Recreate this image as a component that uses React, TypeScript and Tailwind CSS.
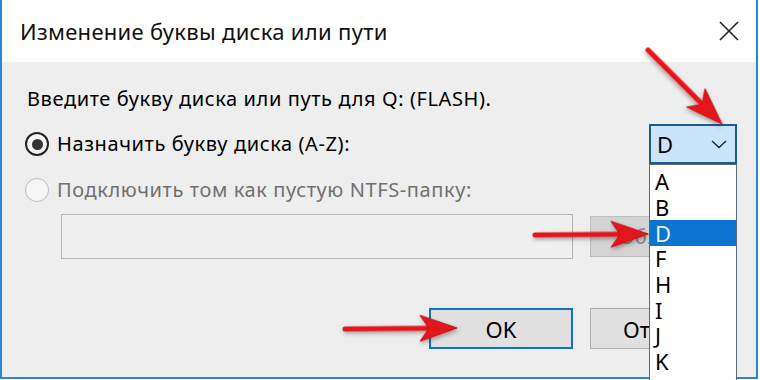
import React from "react";

const letters = ["A", "B", "D", "F", "H", "I", "J", "K"];

type ArrowProps = { x1: number; y1: number; x2: number; y2: number };

// red annotation arrow, drawn horizontally then rotated toward the tip
function Arrow({ x1, y1, x2, y2 }: ArrowProps) {
  const len = Math.hypot(x2 - x1, y2 - y1);
  const angle = (Math.atan2(y2 - y1, x2 - x1) * 180) / Math.PI;
  return (
    <g transform={`translate(${x1} ${y1}) rotate(${angle})`} filter="url(#shadow)">
      <line x1={0} y1={0} x2={len - 26} y2={0} stroke="#e3151b" strokeWidth={5} strokeLinecap="round" />
      <polygon
        points={`${len},0 ${len - 37},-13 ${len - 28},0 ${len - 37},13`}
        fill="#e3151b"
        stroke="#c80f14"
        strokeWidth={1}
        strokeLinejoin="round"
      />
    </g>
  );
}

export default function App() {
  return (
    <div className="relative w-[760px] h-[380px] bg-white overflow-hidden font-['Noto_Sans',sans-serif] text-black">
      <div className="w-[758px] h-[379px] border-x-2 border-b-2 border-[#2a87d8] flex flex-col">
        {/* Title bar */}
        <div className="h-[62px] bg-white flex items-center justify-between pl-[18px] pr-[16px]">
          <span className="text-[22px] leading-[28px] tracking-[0.3px] text-[#111]">Изменение буквы диска или пути</span>
          <svg width="22" height="22" viewBox="0 0 22 22" className="text-[#222]">
            <path d="M2 2 L20 20 M20 2 L2 20" stroke="currentColor" strokeWidth="1.6" />
          </svg>
        </div>

        {/* Body */}
        <div className="flex-1 bg-[#eeeeee] pl-[23px] pr-[19px] pt-[24px] text-[20px] leading-[26px] tracking-[0.6px]">
          <div className="h-[26px] flex items-center pl-[2px]">
            Введите букву диска или путь для Q: (FLASH).
          </div>

          <div className="mt-[12px] h-[40px] flex items-center">
            <span className="w-[24px] h-[24px] rounded-full border-2 border-[#222] bg-[#f4f4f4] flex items-center justify-center">
              <span className="w-[11px] h-[11px] rounded-full bg-[#333]" />
            </span>
            <span className="ml-[8px] flex-1">Назначить букву диска (A-Z):</span>
            <div className="w-[88px] h-[40px] bg-[#cce4f7] border-2 border-[#1c5b8f] flex items-center justify-between pl-[6px] pr-[8px]">
              <span className="text-[22px] leading-[28px] tracking-normal">D</span>
              <svg width="16" height="10" viewBox="0 0 16 10">
                <path d="M1 2 L8 8.5 L15 2" fill="none" stroke="#222" strokeWidth="1.4" />
              </svg>
            </div>
          </div>

          <div className="mt-[13px] h-[26px] flex items-center text-[#707070]">
            <span className="w-[24px] h-[24px] rounded-full border border-[#bdbdbd] bg-[#f7f7f7]" />
            <span className="ml-[8px]">Подключить том как пустую NTFS-папку:</span>
          </div>

          <div className="mt-[11px] flex gap-[17px] pl-[36px]">
            <div className="w-[512px] h-[45px] border border-[#b4b4b4] bg-[#f0f0f0]" />
            <div className="w-[147px] h-[41px] mt-[2px] border border-[#bcbcbc] bg-[#d4d4d4] flex items-center pl-[28px] text-[#8a8a8a]">
              Обзор...
            </div>
          </div>

          <div className="mt-[49px] flex gap-[17px] pl-[404px] text-[22px] leading-[28px] tracking-normal">
            <div className="w-[144px] h-[41px] border-2 border-[#0f73c7] bg-[#e1e1e1] flex items-center justify-center">
              OK
            </div>
            <div className="w-[147px] h-[41px] border border-[#adadad] bg-[#e1e1e1] flex items-center pl-[32px]">
              Отмена
            </div>
          </div>
        </div>
      </div>

      {/* Open drop-down list */}
      <div className="absolute left-[649px] top-[164px] w-[88px] h-[230px] bg-white border border-[#5d6b78] pt-[4px] text-[22px] leading-[25px]">
        {letters.map((l) => (
          <div
            key={l}
            className={
              l === "D"
                ? "h-[25.7px] flex items-center pl-[5px] bg-[#0a74d0] text-[#e6f2fc]"
                : "h-[25.7px] flex items-center pl-[5px]"
            }
          >
            {l}
          </div>
        ))}
      </div>

      {/* Red annotation arrows */}
      <svg className="absolute inset-0 pointer-events-none" width="760" height="380">
        <defs>
          <filter id="shadow" x="-20%" y="-50%" width="140%" height="200%">
            <feDropShadow dx="1" dy="2" stdDeviation="2" floodColor="#000" floodOpacity="0.35" />
          </filter>
        </defs>
        <Arrow x1={648} y1={50} x2={722} y2={124} />
        <Arrow x1={535} y1={235} x2={648} y2={234} />
        <Arrow x1={345} y1={329} x2={457} y2={328} />
      </svg>
    </div>
  );
}
